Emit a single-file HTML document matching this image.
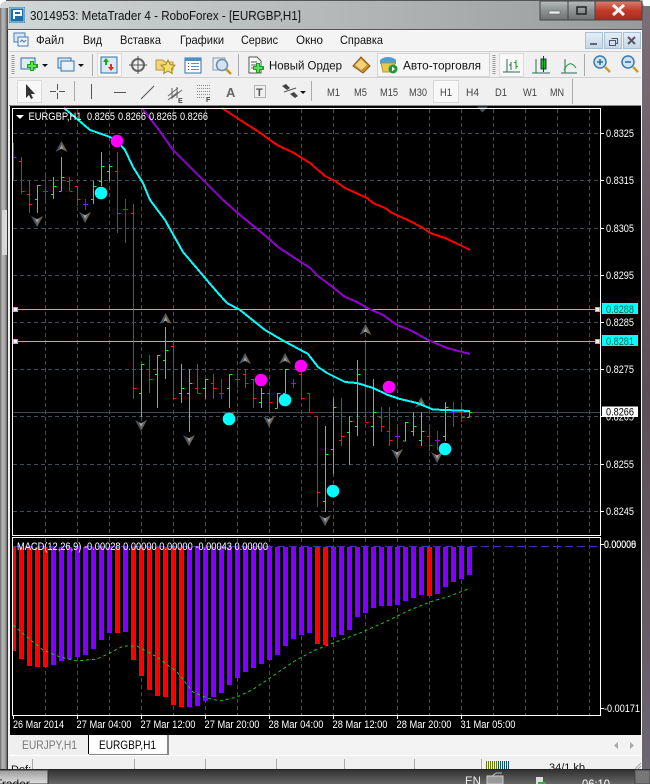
<!DOCTYPE html>
<html><head><meta charset="utf-8"><title>MetaTrader 4</title>
<style>
html,body{margin:0;padding:0;background:#fff;width:650px;height:784px;overflow:hidden}
svg{display:block;position:absolute;left:0;top:0}
text{font-family:"Liberation Sans",sans-serif}
</style></head><body>
<svg width="650" height="784" viewBox="0 0 650 784" xmlns="http://www.w3.org/2000/svg">
<defs>
<linearGradient id="glass" x1="0" y1="0" x2="1" y2="0"><stop offset="0" stop-color="#d2d7d8"/><stop offset=".45" stop-color="#b8bcbc"/><stop offset=".8" stop-color="#a4a7a7"/><stop offset="1" stop-color="#989a9c"/></linearGradient>
<linearGradient id="lstrip" x1="0" y1="0" x2="1" y2="0"><stop offset="0" stop-color="#6c6c6c"/><stop offset=".3" stop-color="#b4b4b4"/><stop offset=".6" stop-color="#a8a8a8"/><stop offset="1" stop-color="#4a4a4a"/></linearGradient>
<linearGradient id="rstrip" x1="0" y1="0" x2="0" y2="1"><stop offset="0" stop-color="#7b6f78"/><stop offset=".5" stop-color="#5a4f58"/><stop offset="1" stop-color="#6d6570"/></linearGradient>
<linearGradient id="tb" x1="0" y1="0" x2="0" y2="1"><stop offset="0" stop-color="#2e2e2e"/><stop offset="1" stop-color="#666"/></linearGradient>
<linearGradient id="tbb" x1="0" y1="0" x2="0" y2="1"><stop offset="0" stop-color="#9a9a9a"/><stop offset="1" stop-color="#e0e0e0"/></linearGradient>
<linearGradient id="cls" x1="0" y1="0" x2="0" y2="1"><stop offset="0" stop-color="#d88070"/><stop offset=".5" stop-color="#c23a28"/><stop offset="1" stop-color="#a82a20"/></linearGradient>
<linearGradient id="btn" x1="0" y1="0" x2="0" y2="1"><stop offset="0" stop-color="#b8bcbc"/><stop offset=".5" stop-color="#8e9292"/><stop offset="1" stop-color="#6e7272"/></linearGradient>
<linearGradient id="mdi" x1="0" y1="0" x2="0" y2="1"><stop offset="0" stop-color="#e4eff8"/><stop offset="1" stop-color="#c4d6e6"/></linearGradient>
<g id="au"><path d="M0-6L-6 5L0 2Z" fill="#47525c"/><path d="M0-6L6 5L0 2Z" fill="#6e6358"/><path d="M0-2L-2 2.5L0 1.5L2 2.5Z" fill="#a8a8a8"/></g>
<g id="ad"><path d="M0 6L-6-5L0-2Z" fill="#47525c"/><path d="M0 6L6-5L0-2Z" fill="#6e6358"/><path d="M0 2L-2-2.5L0-1.5L2-2.5Z" fill="#a8a8a8"/></g>
</defs>

<!-- glass -->
<rect width="650" height="784" fill="#fff"/>
<rect x="0" y="1" width="644" height="30" rx="6" fill="url(#glass)"/>
<path d="M6 .5H640" stroke="#555"/>
<rect x="0" y="8" width="8" height="762" fill="url(#lstrip)"/>
<rect x="642" y="6" width="8" height="764" fill="url(#rstrip)"/>
<rect x="2" y="210" width="5" height="45" fill="#d8d8d8"/>
<rect x="8" y="30" width="634" height="740" fill="#f0f0f0"/>
<path d="M7.500 30V770" stroke="#333"/>
<path d="M7 29.500H642" stroke="#555"/>
<path d="M8 30.500H641.500V770" stroke="#f8f8f8" fill="none"/>

<!-- app icon -->
<rect x="9" y="7" width="16" height="16" fill="#1d6ea8"/><rect x="10" y="8" width="14" height="14" fill="none" stroke="#bfe0f5"/>
<path d="M14 19V11H21V15H14" fill="none" stroke="#fff" stroke-width="2"/>
<text x="30" y="20" font-size="12.500" textLength="271" lengthAdjust="spacingAndGlyphs" fill="#111">3014953: MetaTrader 4 - RoboForex - [EURGBP,H1]</text>

<!-- window buttons -->
<rect x="540" y="1" width="28" height="19" fill="url(#btn)" stroke="#444"/>
<rect x="568" y="1" width="27" height="19" fill="url(#btn)" stroke="#444"/>
<rect x="595" y="1" width="47" height="19" fill="url(#cls)" stroke="#444"/>
<rect x="549" y="11" width="11" height="3" fill="#e8e8e8" stroke="#555" stroke-width=".5"/>
<rect x="577" y="7" width="9" height="7" fill="none" stroke="#222" stroke-width="1.500"/>
<path d="M613 5L624 15M624 5L613 15" stroke="#f4f4f4" stroke-width="3"/>

<!-- menu -->
<rect x="9" y="31" width="632" height="20" fill="#f4f4f4"/>
<rect x="14" y="33" width="11" height="9" fill="#dce8f4" stroke="#4a7ab0"/><rect x="18" y="37" width="10" height="9" fill="#eef4fa" stroke="#4a7ab0"/>
<path d="M20 42l2-2 2 2 2-2" stroke="#4a7ab0" fill="none"/>
<g font-size="12" fill="#111">
<text x="36" y="44" textLength="28" lengthAdjust="spacingAndGlyphs">Файл</text>
<text x="83" y="44" textLength="19" lengthAdjust="spacingAndGlyphs">Вид</text>
<text x="120" y="44" textLength="41" lengthAdjust="spacingAndGlyphs">Вставка</text>
<text x="180" y="44" textLength="44" lengthAdjust="spacingAndGlyphs">Графики</text>
<text x="241" y="44" textLength="37" lengthAdjust="spacingAndGlyphs">Сервис</text>
<text x="296" y="44" textLength="27" lengthAdjust="spacingAndGlyphs">Окно</text>
<text x="340" y="44" textLength="43" lengthAdjust="spacingAndGlyphs">Справка</text>
</g>
<g stroke="#a8c0d4" fill="url(#mdi)"><rect x="585.500" y="32.500" width="17" height="16"/><rect x="604.500" y="32.500" width="17" height="16"/><rect x="623.500" y="32.500" width="17" height="16"/></g>
<rect x="590" y="43" width="7" height="2" fill="#667"/>
<path d="M611.500 38.500h6v5h-2M609.500 40.500h6v5h-6z" fill="none" stroke="#556"/>
<path d="M628 37l7 7M635 37l-7 7" stroke="#556" stroke-width="2"/>

<!-- toolbar 1 -->
<rect x="9" y="51" width="632" height="27" fill="#f0f0f0"/>
<path d="M9 77.500H641M9 51.500H641" stroke="#d0d0d0"/>
<path d="M13 55V75M494 55V75M13 83V103M316 83V103" stroke="#999" stroke-dasharray="1 1" stroke-width="3"/>
<!-- new chart -->
<rect x="21" y="58" width="14" height="11" fill="#dfeaf5" stroke="#2f6fa8"/>
<path d="M32 61v10M27 66h11" stroke="#1aa51a" stroke-width="4"/><path d="M32 62v8M28 66h8" stroke="#5ee05e" stroke-width="2"/>
<path d="M42 64h6l-3 3z" fill="#111"/>
<!-- profiles -->
<rect x="58" y="58" width="13" height="10" fill="#dfeaf5" stroke="#2f6fa8"/><rect x="61" y="61" width="13" height="10" fill="#e9f1f8" stroke="#2f6fa8"/>
<path d="M78 64h6l-3 3z" fill="#111"/>
<path d="M92.500 54V76" stroke="#aaa"/>
<!-- pressed -->
<rect x="97.500" y="53.500" width="24" height="23" fill="#f8f8f8" stroke="#dcdcdc"/>
<rect x="101" y="57" width="16" height="16" fill="#dbe8f5" stroke="#2f6fa8"/>
<path d="M106 58l3 4h-2v3h-2v-3h-2z" fill="#1aa51a"/><path d="M111 71l3-4h-2v-3h-2v3h-2z" fill="#d83020"/>
<!-- crosshair circle -->
<circle cx="138" cy="65" r="6" fill="none" stroke="#666" stroke-width="2"/><path d="M138 56v18M129 65h18" stroke="#555"/>
<!-- folder star -->
<path d="M156 60h7l2 2h8v8h-17z" fill="#f4d27a" stroke="#b8963c"/>
<path d="M168 60l2.200 4.500 4.800.7-3.500 3.400.8 4.900-4.300-2.300-4.300 2.300.8-4.900-3.500-3.400 4.800-.7z" fill="#f5dc6a" stroke="#a58a28"/>
<!-- navigator -->
<rect x="185" y="58" width="16" height="15" fill="#fff" stroke="#2f6fa8"/><rect x="185" y="58" width="16" height="3" fill="#4a90c8"/>
<path d="M188 63.500h1M188 66.500h1M188 69.500h1" stroke="#c02020"/><path d="M191 63.500h8M191 66.500h8M191 69.500h8" stroke="#6a8ab0"/>
<!-- magnifier -->
<rect x="213" y="58" width="12" height="12" fill="#e8eef4" stroke="#8a9ab0"/>
<circle cx="222" cy="65" r="5.500" fill="#d0e4f4" stroke="#6a8aa8" stroke-width="1.500"/><path d="M226 69l5 5" stroke="#c09820" stroke-width="2.500"/>
<path d="M238.500 54V76" stroke="#aaa"/>
<!-- new order -->
<path d="M249 57h8l4 4v12h-12z" fill="#fff" stroke="#555"/><path d="M251 62h6M251 65h8M251 68h5" stroke="#555"/>
<path d="M258 63v10M253 68h11" stroke="#1aa51a" stroke-width="4"/><path d="M258 64v8M254 68h8" stroke="#5ee05e" stroke-width="2"/>
<text x="269" y="69.500" font-size="12" textLength="73" lengthAdjust="spacingAndGlyphs" fill="#111">Новый Ордер</text>
<!-- gold -->
<path d="M353 66l8-9 9 9-7 7z" fill="#c8922e" stroke="#8a5a14"/><path d="M355 65l6-6 6 6-6 5z" fill="#f3d27a"/>
<!-- auto trading -->
<rect x="377.500" y="53.500" width="112" height="23" fill="#f6f6f6" stroke="#d4d4d4"/>
<path d="M380 60c4-4 12-4 16 0v4h-16z" fill="#4d9fd8"/><path d="M381 63h14l-2 9h-10z" fill="#e8c850" stroke="#b89a30"/>
<circle cx="393" cy="69" r="4.500" fill="#1a9a3a"/><path d="M392 66.500v5l3-2.500z" fill="#fff"/>
<text x="403" y="69.500" font-size="12" textLength="78" lengthAdjust="spacingAndGlyphs" fill="#111">Авто-торговля</text>
<!-- chart types -->
<rect x="499.500" y="53.500" width="24" height="23" fill="#f8f8f8" stroke="#dcdcdc"/>
<g fill="none" stroke="#2a6a5a"><path d="M507 59v13M503 72h17"/></g>
<path d="M516 60v9M514 62.500h2M516 66.500h2" stroke="#1aa51a"/><path d="M511 62v8M509 65h2" stroke="#2a6a5a"/>
<path d="M536 59v14M532 73h18" stroke="#2a6a5a" fill="none"/><rect x="541" y="59" width="5" height="10" fill="#1fb51f" stroke="#234"/><path d="M543.500 56v16" stroke="#234"/>
<path d="M565 59v14M561 73h16" stroke="#2a6a5a" fill="none"/><path d="M564 70c4-8 8-8 12-2" stroke="#1a9a3a" fill="none"/>
<path d="M584.500 54V76" stroke="#aaa"/>
<circle cx="600" cy="62" r="6" fill="#cfe4f5" stroke="#3a7ab0" stroke-width="1.500"/><path d="M597 62h6M600 59v6" stroke="#2a6a9a" stroke-width="1.500"/><path d="M605 67l5 5" stroke="#c8a020" stroke-width="2.500"/>
<circle cx="628" cy="62" r="6" fill="#cfe4f5" stroke="#3a7ab0" stroke-width="1.500"/><path d="M625 62h6" stroke="#2a6a9a" stroke-width="1.500"/><path d="M633 67l5 5" stroke="#c8a020" stroke-width="2.500"/>

<!-- toolbar 2 -->
<rect x="9" y="78" width="632" height="28" fill="#f0f0f0"/>
<rect x="17.500" y="80.500" width="24" height="22" fill="#f8f8f8" stroke="#dcdcdc"/>
<path d="M26 84v14l3-3 2 4 2-1-2-4h4z" fill="#333"/>
<path d="M57.500 84V90M57.500 93V99M50 91.500H56M59 91.500H65" stroke="#555"/>
<path d="M74.500 81V101" stroke="#aaa"/>
<path d="M91.500 84V99M114 92.500H126M141 99L154 86" stroke="#555"/>
<path d="M168 96l10-8M168 100l10-8M172 98l10-8M172 88v11M177 87v11" stroke="#666"/>
<text x="178" y="103" font-size="7" font-weight="bold" fill="#444">E</text>
<path d="M197 85.500h14M197 88.500h14M197 91.500h14M197 94.500h14M197 97.500h8" stroke="#888" stroke-dasharray="1 1"/>
<text x="206" y="102" font-size="7" font-weight="bold" fill="#444">F</text>
<text x="226" y="97" font-size="13" font-weight="bold" fill="#666">A</text>
<rect x="254.500" y="85.500" width="11" height="12" fill="none" stroke="#777" stroke-dasharray="1 1"/>
<text x="256" y="96" font-size="11" font-weight="bold" fill="#555">T</text>
<path d="M282 86l4-2 4 4-3 2zM290 94l4-2 4 4-3 2z" fill="#444"/><path d="M284 92l12-4" stroke="#555"/>
<path d="M300 91h6l-3 3z" fill="#111"/>
<path d="M311.500 81V101" stroke="#aaa"/>
<rect x="433.500" y="80.500" width="25" height="22" fill="#f8f8f8" stroke="#d8d8d8"/>
<g font-size="11" fill="#444">
<text x="327" y="96" textLength="13" lengthAdjust="spacingAndGlyphs">M1</text>
<text x="354" y="96" textLength="13" lengthAdjust="spacingAndGlyphs">M5</text>
<text x="380" y="96" textLength="18" lengthAdjust="spacingAndGlyphs">M15</text>
<text x="409" y="96" textLength="18" lengthAdjust="spacingAndGlyphs">M30</text>
<text x="440" y="96" textLength="12" lengthAdjust="spacingAndGlyphs">H1</text>
<text x="466" y="96" textLength="13" lengthAdjust="spacingAndGlyphs">H4</text>
<text x="495" y="96" textLength="12" lengthAdjust="spacingAndGlyphs">D1</text>
<text x="523" y="96" textLength="14" lengthAdjust="spacingAndGlyphs">W1</text>
<text x="550" y="96" textLength="14" lengthAdjust="spacingAndGlyphs">MN</text>
</g>
<path d="M572.500 79V104" stroke="#aaa"/>
<path d="M9 105.500H641" stroke="#888"/>

<!-- black chart -->
<rect x="10" y="106" width="631" height="629" fill="#000"/>
<!-- grids -->
<g stroke="#424d58" stroke-dasharray="4 3" shape-rendering="crispEdges" fill="none">
<path d="M45.500 109V535M77.500 109V535M109.500 109V535M141.500 109V535M173.500 109V535M205.500 109V535M237.500 109V535M269.500 109V535M301.500 109V535M333.500 109V535M365.500 109V535M397.500 109V535M429.500 109V535M461.500 109V535M493.500 109V535M525.500 109V535M557.500 109V535M589.500 109V535"/>
<path d="M45.500 538V715M77.500 538V715M109.500 538V715M141.500 538V715M173.500 538V715M205.500 538V715M237.500 538V715M269.500 538V715M301.500 538V715M333.500 538V715M365.500 538V715M397.500 538V715M429.500 538V715M461.500 538V715M493.500 538V715M525.500 538V715M557.500 538V715M589.500 538V715"/>
<path d="M13 133.500H600M13 180.500H600M13 228.500H600M13 275.500H600M13 322.500H600M13 369.500H600M13 416.500H600M13 464.500H600M13 511.500H600"/>
</g>
<path d="M13 412.500H600" stroke="#3c4852" shape-rendering="crispEdges"/>
<path d="M13 309.500H600M13 341.500H600" stroke="#18f0f0" shape-rendering="crispEdges"/>
<g fill="#fff" stroke="#18f0f0"><rect x="13.500" y="307.500" width="4" height="4"/><rect x="13.500" y="339.500" width="4" height="4"/><rect x="595.500" y="307.500" width="4" height="4"/><rect x="595.500" y="339.500" width="4" height="4"/></g>

<!-- OHLC bars -->
<g fill="none" shape-rendering="crispEdges">
<path stroke="#ff1010" d="M21.500 157V194M19 161.500h2.500M21.500 191.500h3M29.500 181V213M27 194.500h2.500M29.500 204.500h3M69.500 177V191M67 181.500h2.500M69.500 191.500h3M77.500 186V206M75 186.500h2.500M77.500 199.500h3M117.500 152V233M115 171.500h2.500M117.500 213.500h3M133.500 204V399M131 213.500h2.500M133.500 388.500h3M149.500 355V393M147 369.500h2.500M149.500 379.500h3M173.500 341V398M171 346.500h2.500M173.500 398.500h3M197.500 364V393M195 388.500h2.500M197.500 393.500h3M213.500 374V399M211 383.500h2.500M213.500 388.500h3M245.500 369V388M243 374.500h2.500M245.500 383.500h3M253.500 379V408M251 379.500h2.500M253.500 398.500h3M269.500 393V412M267 393.500h2.500M269.500 402.500h3M301.500 372V398M299 374.500h2.500M301.500 398.500h3M309.500 393V412M307 393.500h2.500M309.500 412.500h3M317.500 416V507M315 416.500h2.500M317.500 492.500h3M341.500 398V446M339 440.500h2.500M341.500 436.500h3M365.500 342V422M363 369.500h2.500M365.500 422.500h3M381.500 407V432M379 417.500h2.500M381.500 426.500h3M389.500 407V446M387 431.500h2.500M389.500 440.500h3M429.500 426V451M427 436.500h2.500M429.500 445.500h3M461.500 402V422M459 412.500h2.500M461.500 417.500h3"/>
<path stroke="#20f020" d="M37.500 185V213M35 199.500h2.500M37.500 185.500h3M53.500 177V199M51 194.500h2.500M53.500 186.500h3M61.500 157V191M59 191.500h2.500M61.500 177.500h3M93.500 181V204M91 199.500h2.500M93.500 186.500h3M101.500 152V186M99 181.500h2.500M101.500 166.500h3M109.500 164V181M107 171.500h2.500M109.500 166.500h3M141.500 364V417M139 393.500h2.500M141.500 364.500h3M157.500 355V408M155 374.500h2.500M157.500 355.500h3M165.500 327V379M163 360.500h2.500M165.500 350.500h3M181.500 364V403M179 393.500h2.500M181.500 388.500h3M189.500 369V432M187 393.500h2.500M189.500 383.500h3M205.500 379V399M203 388.500h2.500M205.500 379.500h3M229.500 374V408M227 388.500h2.500M229.500 374.500h3M261.500 388V408M259 402.500h2.500M261.500 393.500h3M277.500 393V408M275 408.500h2.500M277.500 393.500h3M285.500 369V393M283 393.500h2.500M285.500 369.500h3M325.500 426V512M323 501.500h2.500M325.500 454.500h3M333.500 398V474M331 449.500h2.500M333.500 407.500h3M349.500 416V465M347 432.500h2.500M349.500 421.500h3M357.500 360V436M355 426.500h2.500M357.500 374.500h3M373.500 379V446M371 426.500h2.500M373.500 412.500h3M405.500 422V441M403 441h2.500M405.500 422.500h3M413.500 412V436M411 431.500h2.500M413.500 426.500h3M421.500 412V446M419 440.500h2.500M421.500 431.500h3M445.500 402V441M443 436.500h2.500M445.500 407.500h3M469.500 412V417M467 417.500h2.500M469.500 412.500h3"/>
<path stroke="#9010e0" d="M13.500 143V180M13.500 157.500h3M45.500 175V203M43 191.500h5M85.500 199V210M83 204.500h5M125.500 199V243M123 209.500h5M221.500 379V399M219 393.500h5M237.500 372V388M235 379.500h5M293.500 379V388M291 383.500h5M397.500 426V447M395 436.500h5M437.500 431V450M435 440.500h5M453.500 402V427M451 412.500h5"/>
</g>

<!-- arrows -->
<use href="#au" x="61.500" y="147"/><use href="#au" x="165.500" y="319"/><use href="#au" x="245" y="359"/><use href="#au" x="285" y="359"/><use href="#au" x="365.500" y="330"/><use href="#au" x="421" y="403"/>
<use href="#ad" x="37" y="221"/><use href="#ad" x="85" y="217"/><use href="#ad" x="141" y="425"/><use href="#ad" x="189" y="440"/><use href="#ad" x="269" y="421"/><use href="#ad" x="325" y="520"/><use href="#ad" x="397" y="454"/><use href="#ad" x="437" y="457"/><use href="#ad" x="229" y="416"/>
<path d="M477 106.500h11l-5.500 6z" fill="#4a525a"/>

<!-- MAs -->
<g fill="none" stroke-width="2" shape-rendering="crispEdges">
<path stroke="#ff0000" d="M222 108L240 120L259 132L277 145L292 152L310 163L325 176L335 181L345 188L367 198L373 203L385 208L392 213L408 220L423 228L430 233L445 238L460 245L470 250"/>
<path stroke="#9400d3" d="M142 108L155 125L159 130L173 150L193 170L223 200L240 215L268 238L278 247L310 268L318 276L330 285L345 297L357 302L367 308L383 315L397 325L410 330L428 340L447 348L470 354"/>
<path stroke="#00ffff" d="M64 108L83 124L90 130L110 137L118 142L125 150L133 167L143 183L150 200L165 220L183 252L200 272L217 292L227 303L240 310L265 330L282 340L308 354L318 367L327 373L335 377L345 382L357 383L373 388L388 395L400 399L417 403L433 409.500L470 411"/>
</g>

<!-- signals -->
<g fill="#ff00ff"><circle cx="117" cy="141" r="6.300"/><circle cx="261" cy="380" r="6.300"/><circle cx="301" cy="366" r="6.300"/><circle cx="389" cy="387" r="6.300"/></g>
<g fill="#00ffff"><circle cx="101" cy="193" r="6.300"/><circle cx="229" cy="419" r="6.300"/><circle cx="285" cy="400" r="6.300"/><circle cx="333" cy="491" r="6.300"/><circle cx="445" cy="449" r="6.300"/></g>

<!-- MACD bars -->
<g shape-rendering="crispEdges">
<path fill="#ff0000" d="M13 547h3V651h-3zM19 547h5V659h-5zM27 547h5V666h-5zM35 547h5V667h-5zM43 547h5V667h-5zM115 547h5V633h-5zM131 547h5V660h-5zM139 547h5V676h-5zM147 547h5V690h-5zM155 547h5V696h-5zM163 547h5V697h-5zM171 547h5V705h-5zM179 547h5V707h-5zM315 547h5V644h-5zM323 547h5V645h-5zM427 547h5V596h-5z"/>
<path fill="#8000ff" d="M51 547h5V665h-5zM59 547h5V661h-5zM67 547h5V659h-5zM75 547h5V657h-5zM83 547h5V655h-5zM91 547h5V649h-5zM99 547h5V640h-5zM107 547h5V633h-5zM123 547h5V632h-5zM187 547h5V707h-5zM195 547h5V706h-5zM203 547h5V701h-5zM211 547h5V697h-5zM219 547h5V693h-5zM227 547h5V685h-5zM235 547h5V678h-5zM243 547h5V672h-5zM251 547h5V668h-5zM259 547h5V664h-5zM267 547h5V660h-5zM275 547h5V655h-5zM283 547h5V646h-5zM291 547h5V639h-5zM299 547h5V635h-5zM307 547h5V633h-5zM331 547h5V637h-5zM339 547h5V635h-5zM347 547h5V630h-5zM355 547h5V617h-5zM363 547h5V613h-5zM371 547h5V608h-5zM379 547h5V606h-5zM387 547h5V606h-5zM395 547h5V605h-5zM403 547h5V601h-5zM411 547h5V598h-5zM419 547h5V595h-5zM435 547h5V594h-5zM443 547h5V587h-5zM451 547h5V582h-5zM459 547h5V579h-5zM467 547h5V575h-5z"/>
</g>
<path d="M13 546.500H600" stroke="#4030b0" stroke-dasharray="8 4" shape-rendering="crispEdges"/>
<path fill="none" stroke="#1fc81f" stroke-dasharray="3 3" d="M13 625L33 642L43 650L60 657L77 661L97 659L110 653L123 646L137 646L157 657L177 672L193 692L207 698L220 701L237 697L252 690L270 678L293 662L313 651L333 643L360 633L383 623L410 610L430 602L450 596L468 589"/>

<!-- frames -->
<g fill="none" stroke="#fff" shape-rendering="crispEdges">
<rect x="12.500" y="108.500" width="588" height="427"/>
<rect x="12.500" y="537.500" width="588" height="178"/>
<path d="M601 133.500h3M601 180.500h3M601 228.500h3M601 275.500h3M601 322.500h3M601 369.500h3M601 416.500h3M601 464.500h3M601 511.500h3M601 544.500h3M601 708.500h3"/>
<path d="M13.500 716v3M77.500 716v3M141.500 716v3M205.500 716v3M269.500 716v3M333.500 716v3M397.500 716v3M461.500 716v3"/>
</g>

<!-- legends -->
<path d="M16 115h8l-4 4z" fill="#fff"/>
<g font-size="11" fill="#fff">
<text x="28.500" y="120" textLength="53" lengthAdjust="spacingAndGlyphs">EURGBP,H1</text>
<text x="87" y="120" textLength="28" lengthAdjust="spacingAndGlyphs">0.8265</text><text x="118" y="120" textLength="28" lengthAdjust="spacingAndGlyphs">0.8266</text><text x="149" y="120" textLength="28" lengthAdjust="spacingAndGlyphs">0.8265</text><text x="180" y="120" textLength="28" lengthAdjust="spacingAndGlyphs">0.8266</text>
<text x="17" y="550" textLength="251" lengthAdjust="spacingAndGlyphs">MACD(12,26,9) -0.00028 0.00000 0.00000 -0.00043 0.00000</text>
<text x="606" y="137" textLength="28" lengthAdjust="spacingAndGlyphs">0.8325</text>
<text x="606" y="184" textLength="28" lengthAdjust="spacingAndGlyphs">0.8315</text>
<text x="606" y="232" textLength="28" lengthAdjust="spacingAndGlyphs">0.8305</text>
<text x="606" y="279" textLength="28" lengthAdjust="spacingAndGlyphs">0.8295</text>
<text x="606" y="326" textLength="28" lengthAdjust="spacingAndGlyphs">0.8285</text>
<text x="606" y="373" textLength="28" lengthAdjust="spacingAndGlyphs">0.8275</text>
<text x="606" y="420.500" textLength="28" lengthAdjust="spacingAndGlyphs">0.8265</text>
<text x="606" y="468" textLength="28" lengthAdjust="spacingAndGlyphs">0.8255</text>
<text x="606" y="515" textLength="28" lengthAdjust="spacingAndGlyphs">0.8245</text>
<text x="604" y="548" textLength="32" lengthAdjust="spacingAndGlyphs">0.00000</text>
<text x="604" y="548" textLength="32" lengthAdjust="spacingAndGlyphs">0.00008</text>
<text x="604" y="712" textLength="36" lengthAdjust="spacingAndGlyphs">-0.00171</text>
<text x="13" y="728" textLength="51" lengthAdjust="spacingAndGlyphs">26 Mar 2014</text>
<text x="76.500" y="728" textLength="55" lengthAdjust="spacingAndGlyphs">27 Mar 04:00</text>
<text x="140.500" y="728" textLength="55" lengthAdjust="spacingAndGlyphs">27 Mar 12:00</text>
<text x="204.500" y="728" textLength="55" lengthAdjust="spacingAndGlyphs">27 Mar 20:00</text>
<text x="268.500" y="728" textLength="55" lengthAdjust="spacingAndGlyphs">28 Mar 04:00</text>
<text x="332.500" y="728" textLength="55" lengthAdjust="spacingAndGlyphs">28 Mar 12:00</text>
<text x="396.500" y="728" textLength="55" lengthAdjust="spacingAndGlyphs">28 Mar 20:00</text>
<text x="460.500" y="728" textLength="55" lengthAdjust="spacingAndGlyphs">31 Mar 05:00</text>
</g>
<rect x="602" y="303" width="36" height="11" fill="#00ffff"/><rect x="602" y="335" width="36" height="11" fill="#00ffff"/><rect x="602" y="406.500" width="36" height="10.500" fill="#fff"/>
<g font-size="11"><text x="606" y="313" textLength="28" lengthAdjust="spacingAndGlyphs" fill="#064">0.8288</text><text x="606" y="345" textLength="28" lengthAdjust="spacingAndGlyphs" fill="#064">0.8281</text><text x="606" y="415.500" textLength="28" lengthAdjust="spacingAndGlyphs" fill="#000">0.8266</text></g>

<!-- tabs -->
<rect x="9" y="735" width="632" height="20" fill="#f3f3f3"/>
<rect x="10" y="735" width="79" height="19" fill="#efefef"/>
<path d="M88.500 735V753.500H167.500V735" fill="#fff" stroke="none"/>
<path d="M88.500 735V754" stroke="#000"/>
<path d="M168 735V755H89" stroke="#888" stroke-width="2" fill="none"/>
<text x="22" y="749" font-size="12" textLength="55" lengthAdjust="spacingAndGlyphs" fill="#777">EURJPY,H1</text>
<text x="99" y="749" font-size="12" textLength="57" lengthAdjust="spacingAndGlyphs" fill="#000">EURGBP,H1</text>
<path d="M618 742v7l-4-3.500zM630 742v7l4-3.500z" fill="#aaa"/>

<!-- status -->
<rect x="9" y="755" width="632" height="15" fill="#f0f0f0"/>
<path d="M9 755.500H641" stroke="#fff"/>
<path d="M32.500 759V769M134.500 759V769M205.500 759V769M276.500 759V769M344.500 759V769M414.500 759V769M481.500 759V769" stroke="#aaa"/>
<text x="11" y="773" font-size="11" fill="#111">Def:</text>
<text x="549" y="771" font-size="11" textLength="36" lengthAdjust="spacingAndGlyphs" fill="#111">34/1 kb</text>
<g shape-rendering="crispEdges">
<path d="M486.500 761V769M488.500 761V769M490.500 761V769M492.500 761V769M494.500 761V769M496.500 761V769" stroke="#6a7a10"/>
<path d="M498.500 761V769M500.500 761V769M502.500 761V769M504.500 761V769M506.500 761V769M508.500 761V769" stroke="#12506a"/>
</g>
<path d="M635 769l6-6M638 769l3-3" stroke="#aaa"/>

<!-- taskbar -->
<rect x="0" y="769" width="650" height="15" fill="url(#tb)"/>
<path d="M0 769.500H650" stroke="#222"/>
<rect x="-2" y="770" width="50" height="14" fill="url(#tbb)" stroke="#333"/>
<text x="-5" y="788" font-size="12" fill="#111">Trader</text>
<text x="465" y="785" font-size="11.500" fill="#eee">EN</text>
<rect x="487" y="776" width="16" height="8" fill="#999" stroke="#ccc"/><path d="M492 776l4-3 6 0" stroke="#bbb" fill="none"/>
<rect x="536" y="777" width="7" height="7" fill="#ddd"/><rect x="538" y="782" width="8" height="2" fill="#3aaa3a"/>
<text x="582" y="788" font-size="11.500" textLength="28" lengthAdjust="spacingAndGlyphs" fill="#fff">06:10</text>
<rect x="635" y="770" width="15" height="14" fill="#777" stroke="#444"/>
</svg>
</body></html>
